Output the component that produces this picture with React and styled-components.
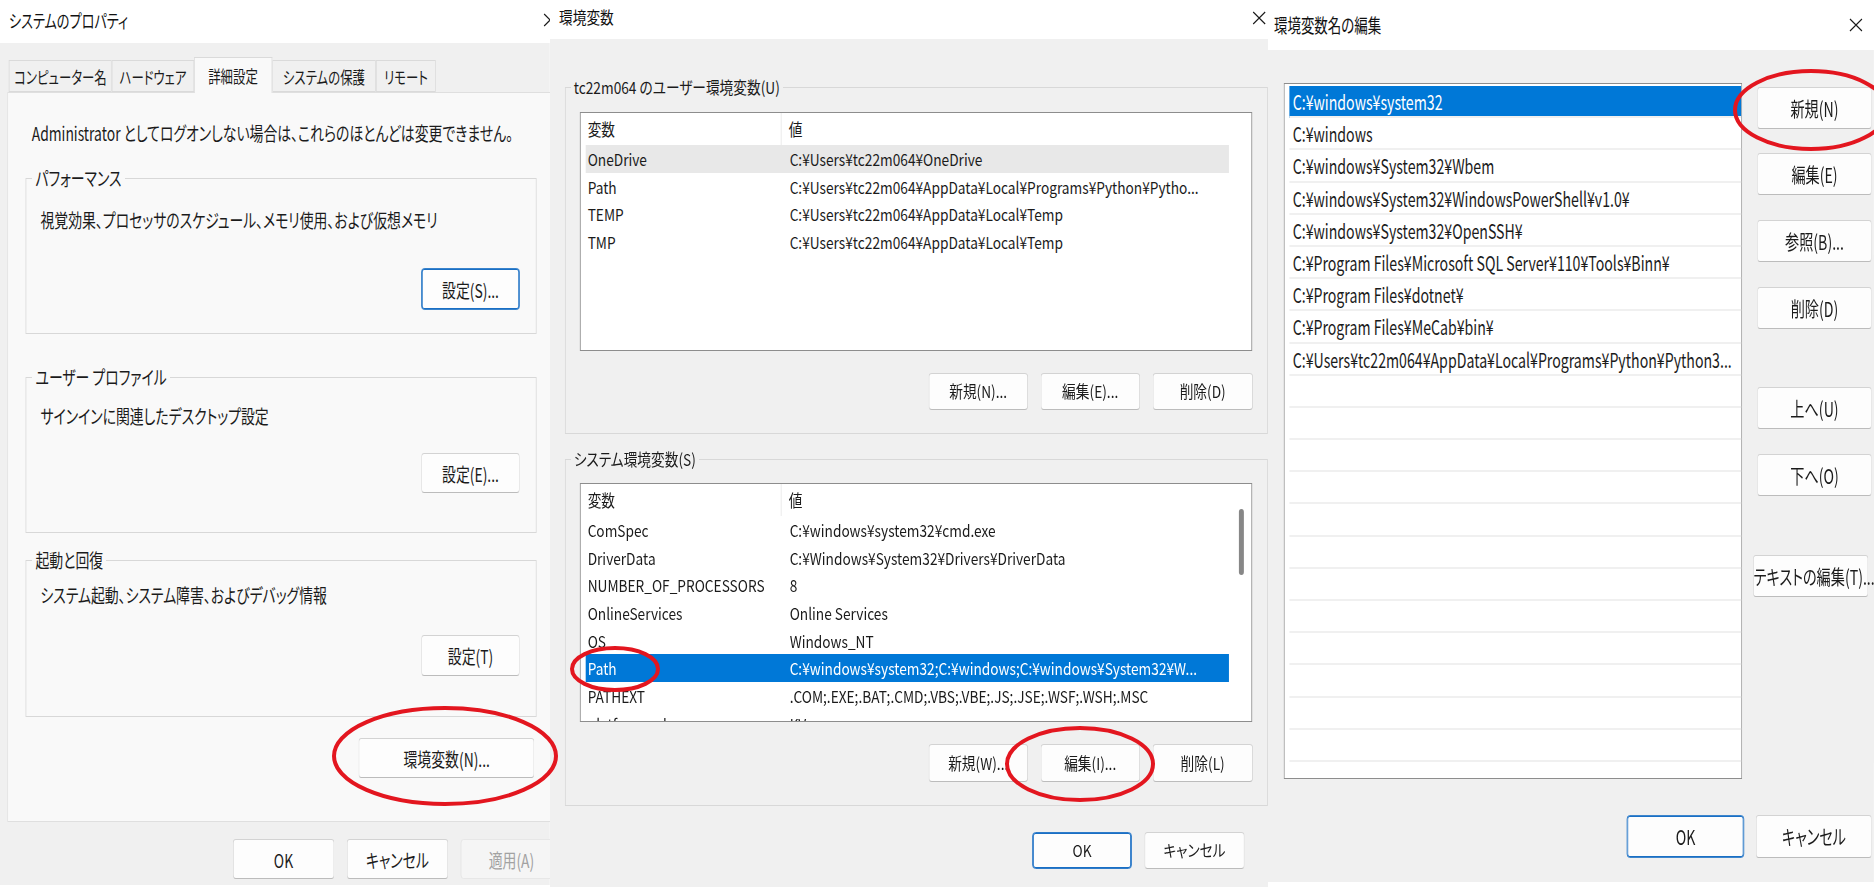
import React from "react";
import styled, { createGlobalStyle } from "styled-components";

// horizontal sizes are written in screen px and divided by the window's squish factor
const hx = (n) => `calc(${n}px / var(--sx))`;

const GlobalStyle = createGlobalStyle`
  html, body {
    margin: 0;
    padding: 0;
    overflow: hidden;
    background: #fff;
  }
  body {
    font-family: "Noto Sans CJK JP", "Noto Sans", sans-serif;
    font-feature-settings: "palt";
    color: #1b1b1b;
  }
`;

const Page = styled.div`
  position: relative;
  display: flex;
  width: 1874px;
  height: 890px;
  overflow: hidden;
  background: #fff;
`;

const Window = styled.section`
  --sx: ${(p) => p.$sx};
  flex: none;
  width: ${(p) => p.$w}px;
  height: 890px;
  overflow: hidden;
  font-size: ${(p) => p.$fs}px;
`;

const Squish = styled.div`
  width: calc(100% / var(--sx));
  height: 100%;
  display: flex;
  flex-direction: column;
  transform: scaleX(var(--sx));
  transform-origin: left top;
`;

const TitleBar = styled.header`
  flex: none;
  height: ${(p) => p.$h}px;
  box-sizing: border-box;
  padding: 0 0 ${(p) => p.$pb || 0}px ${(p) => hx(p.$pl)};
  display: flex;
  align-items: center;
  background: #fff;
  font-size: ${(p) => p.$fs}px;
  line-height: 1;
  color: #111;
`;

const CloseSvg = styled.svg`
  flex: none;
  margin-left: auto;
  margin-right: ${(p) => hx(p.$mr)};
  width: ${hx(14)};
  height: 14px;
`;

const Body = styled.div`
  flex: none;
  height: ${(p) => p.$h}px;
  box-sizing: border-box;
  padding-top: ${(p) => p.$pt}px;
  padding-left: ${(p) => hx(p.$pl || 0)};
  display: flex;
  flex-direction: column;
  background: #f0f0f0;
`;

/* ---------- tabs (system properties) ---------- */

const TabRow = styled.div`
  display: flex;
  align-items: flex-end;
  height: 35px;
  margin-left: ${hx(9)};
  font-size: 17px;
`;

const Tab = styled.div`
  flex: none;
  width: ${(p) => hx(p.$w)};
  height: ${(p) => (p.$active ? 36 : 32)}px;
  box-sizing: border-box;
  margin-bottom: ${(p) => (p.$active ? -1 : 0)}px;
  z-index: ${(p) => (p.$active ? 1 : 0)};
  display: flex;
  align-items: center;
  justify-content: center;
  border: 1px solid #dadada;
  border-bottom: ${(p) => (p.$active ? "none" : "1px solid #dadada")};
  background: ${(p) => (p.$active ? "#f9f9f9" : "#f0f0f0")};
  white-space: nowrap;
`;

const TabPanel = styled.div`
  width: ${hx(560)};
  height: 730px;
  box-sizing: border-box;
  margin-left: ${hx(7)};
  padding: 27px 0 0 ${hx(18)};
  border: 1px solid #dfdfdf;
  background: #f9f9f9;
`;

const Intro = styled.div`
  padding-left: ${hx(6)};
  line-height: 26px;
  white-space: nowrap;
`;

/* ---------- group boxes ---------- */

const Group = styled.fieldset`
  min-width: 0;
  width: ${(p) => hx(p.$w)};
  box-sizing: border-box;
  margin: ${(p) => p.$mt}px 0 0 ${(p) => hx(p.$ml || 0)};
  padding: 0 0 ${(p) => p.$pb}px;
  border: 1px solid #d8d8d8;
`;

const Legend = styled.legend`
  margin-left: ${(p) => hx(p.$ml)};
  padding: 0 ${hx(3)};
  line-height: ${(p) => p.$lh}px;
  white-space: nowrap;
`;

const Desc = styled.div`
  margin-top: ${(p) => p.$mt}px;
  padding-left: ${hx(14)};
  line-height: 26px;
  white-space: nowrap;
`;

const BtnRow = styled.div`
  display: flex;
  justify-content: ${(p) => (p.$start ? "flex-start" : "flex-end")};
  gap: ${(p) => hx(p.$gap || 0)};
  margin-top: ${(p) => p.$mt}px;
  padding: 0 ${(p) => hx(p.$pr || 0)} 0 ${(p) => hx(p.$pl || 0)};
`;

const Btn = styled.button`
  flex: none;
  width: ${(p) => hx(p.$w)};
  height: ${(p) => p.$h}px;
  margin: ${(p) => p.$mt || 0}px 0 0 ${(p) => hx(p.$ml || 0)};
  padding: 0;
  box-sizing: border-box;
  font: inherit;
  line-height: 1;
  white-space: nowrap;
  color: ${(p) => (p.$disabled ? "#a2a2a2" : "#1b1b1b")};
  background: ${(p) => (p.$disabled ? "#f5f5f5" : "#fdfdfd")};
  border: 1px solid ${(p) => (p.$primary ? "#1a6fc4" : p.$disabled ? "#e4e4e4" : "#d3d3d3")};
  border-bottom-color: ${(p) => (p.$primary ? "#1a6fc4" : p.$disabled ? "#e4e4e4" : "#bcbcbc")};
  box-shadow: ${(p) => (p.$primary ? "inset 0 0 0 1px #1a6fc4" : "none")};
  border-radius: 4px;
`;

/* ---------- variable tables ---------- */

const ListBox = styled.div`
  flex: none;
  display: flex;
  width: ${(p) => hx(p.$w)};
  height: ${(p) => p.$h}px;
  box-sizing: border-box;
  margin-top: ${(p) => p.$mt || 0}px;
  margin-left: ${(p) => hx(p.$ml || 0)};
  padding-top: ${(p) => p.$pt || 0}px;
  border: 1px solid #8d8d8d;
  background: #fff;
  overflow: hidden;
`;

const Table = styled.div`
  flex: 1;
  min-width: 0;
`;

const HeadRow = styled.div`
  display: grid;
  grid-template-columns: ${hx(196)} 1fr;
  height: 32px;
  margin-left: ${hx(5)};
`;

const HeadCell = styled.div`
  display: flex;
  align-items: center;
  padding-left: ${(p) => hx(p.$pl)};
  border-right: ${(p) => (p.$divider ? "1px solid #e6e6e6" : "none")};
`;

const VarRow = styled.div`
  display: grid;
  grid-template-columns: ${hx(204)} 1fr;
  align-items: center;
  height: 27.7px;
  margin-left: ${hx(5)};
  white-space: nowrap;
  color: ${(p) => (p.$sel ? "#fff" : "inherit")};
  background: ${(p) => (p.$sel ? "#0078d7" : p.$hover ? "#e8e8e8" : "transparent")};
`;

const Cell = styled.div`
  padding-left: ${(p) => hx(p.$pl || 0)};
  overflow: hidden;
`;

const Track = styled.div`
  flex: none;
  width: ${hx(22)};
`;

const Thumb = styled.div`
  width: ${hx(5)};
  height: ${(p) => p.$h}px;
  margin: ${(p) => p.$top}px 0 0 ${hx(10)};
  border-radius: 3px;
  background: #878787;
`;

/* ---------- path editor ---------- */

const EditorMain = styled.div`
  display: flex;
  align-items: flex-start;
`;

const PathRow = styled.div`
  height: 30.2px;
  margin-left: ${hx(5)};
  padding-left: ${hx(3)};
  display: flex;
  align-items: center;
  border-bottom: 2px solid #f0f0f0;
  white-space: nowrap;
  color: ${(p) => (p.$sel ? "#fff" : "inherit")};
  background: ${(p) => (p.$sel ? "#0078d7" : "transparent")};
`;

const SideCol = styled.div`
  display: flex;
  flex-direction: column;
  margin-left: ${hx(15)};
`;

const Overlay = styled.svg`
  position: absolute;
  left: 0;
  top: 0;
  width: 1874px;
  height: 890px;
  pointer-events: none;
`;

/* ---------- data ---------- */

const tabs = [
  ["コンピューター名", 103],
  ["ハードウェア", 82],
  ["詳細設定", 78, true],
  ["システムの保護", 104],
  ["リモート", 60],
];

const groups = [
  { label: "パフォーマンス", desc: "視覚効果、プロセッサのスケジュール、メモリ使用、および仮想メモリ", btn: "設定(S)...", mt: 19, descMt: 16, btnMt: 35, btnH: 42, pb: 23, focus: true },
  { label: "ユーザー プロファイル", desc: "サインインに関連したデスクトップ設定", btn: "設定(E)...", mt: 30, descMt: 13, btnMt: 24, btnH: 40, pb: 39 },
  { label: "起動と回復", desc: "システム起動、システム障害、およびデバッグ情報", btn: "設定(T)", mt: 14, descMt: 9, btnMt: 27, btnH: 41, pb: 40 },
];

const userVars = [
  ["OneDrive", "C:¥Users¥tc22m064¥OneDrive", "hover"],
  ["Path", "C:¥Users¥tc22m064¥AppData¥Local¥Programs¥Python¥Pytho..."],
  ["TEMP", "C:¥Users¥tc22m064¥AppData¥Local¥Temp"],
  ["TMP", "C:¥Users¥tc22m064¥AppData¥Local¥Temp"],
];

const systemVars = [
  ["ComSpec", "C:¥windows¥system32¥cmd.exe"],
  ["DriverData", "C:¥Windows¥System32¥Drivers¥DriverData"],
  ["NUMBER_OF_PROCESSORS", "8"],
  ["OnlineServices", "Online Services"],
  ["OS", "Windows_NT"],
  ["Path", "C:¥windows¥system32;C:¥windows;C:¥windows¥System32¥W...", "sel"],
  ["PATHEXT", ".COM;.EXE;.BAT;.CMD;.VBS;.VBE;.JS;.JSE;.WSF;.WSH;.MSC"],
  ["platformcode", "KV"],
];

const paths = [
  "C:¥windows¥system32",
  "C:¥windows",
  "C:¥windows¥System32¥Wbem",
  "C:¥windows¥System32¥WindowsPowerShell¥v1.0¥",
  "C:¥windows¥System32¥OpenSSH¥",
  "C:¥Program Files¥Microsoft SQL Server¥110¥Tools¥Binn¥",
  "C:¥Program Files¥dotnet¥",
  "C:¥Program Files¥MeCab¥bin¥",
  "C:¥Users¥tc22m064¥AppData¥Local¥Programs¥Python¥Python3...",
];

const sideButtons = [
  ["新規(N)", 4],
  ["編集(E)", 24],
  ["参照(B)...", 25],
  ["削除(D)", 25],
  ["上へ(U)", 58],
  ["下へ(O)", 25],
  ["テキストの編集(T)...", 59, -4],
];

function CloseX({ mr }) {
  return (
    <CloseSvg $mr={mr} viewBox="0 0 14 14" preserveAspectRatio="none">
      <path d="M1 1L13 13M13 1L1 13" stroke="#1a1a1a" strokeWidth="1.1" fill="none" />
    </CloseSvg>
  );
}

function VarTable({ rows, thumb }) {
  return (
    <>
      <Table>
        <HeadRow>
          <HeadCell $pl={2} $divider>変数</HeadCell>
          <HeadCell $pl={7}>値</HeadCell>
        </HeadRow>
        {rows.map(([name, value, state]) => (
          <VarRow key={name} $sel={state === "sel"} $hover={state === "hover"}>
            <Cell $pl={2}>{name}</Cell>
            <Cell>{value}</Cell>
          </VarRow>
        ))}
      </Table>
      <Track>{thumb && <Thumb $top={25} $h={66} />}</Track>
    </>
  );
}

function SystemProperties() {
  return (
    <Window $w={550} $sx={0.73} $fs={19}>
      <Squish>
        <TitleBar $h={43} $pb={3} $pl={9} $fs={18}>
          システムのプロパティ
          <CloseX mr={-7} />
        </TitleBar>
        <Body $h={842} $pt={14}>
          <TabRow>
            {tabs.map(([name, w, active]) => (
              <Tab key={name} $w={w} $active={active}>
                {name}
              </Tab>
            ))}
          </TabRow>
          <TabPanel>
            <Intro>Administrator としてログオンしない場合は、これらのほとんどは変更できません。</Intro>
            {groups.map((g) => (
              <Group key={g.label} $w={511} $mt={g.mt} $pb={g.pb}>
                <Legend $ml={6} $lh={26}>{g.label}</Legend>
                <Desc $mt={g.descMt}>{g.desc}</Desc>
                <BtnRow $mt={g.btnMt} $pr={16}>
                  <Btn $w={99} $h={g.btnH} $primary={g.focus}>{g.btn}</Btn>
                </BtnRow>
              </Group>
            ))}
            <BtnRow $start $mt={21} $pl={333}>
              <Btn $w={176} $h={40}>環境変数(N)...</Btn>
            </BtnRow>
          </TabPanel>
          <BtnRow $start $mt={17} $pl={233} $gap={13}>
            <Btn $w={101} $h={40}>OK</Btn>
            <Btn $w={101} $h={40}>キャンセル</Btn>
            <Btn $w={101} $h={40} $disabled>適用(A)</Btn>
          </BtnRow>
        </Body>
      </Squish>
    </Window>
  );
}

function EnvironmentVariables() {
  return (
    <Window $w={718} $sx={0.83} $fs={16.5}>
      <Squish>
        <TitleBar $h={39} $pb={4} $pl={9} $fs={16.5}>
          環境変数
          <CloseX mr={2} />
        </TitleBar>
        <Body $h={848} $pt={36}>
          <Group $w={703} $ml={15} $mt={0} $pb={23}>
            <Legend $ml={5} $lh={24}>tc22m064 のユーザー環境変数(U)</Legend>
            <ListBox $w={672} $h={239} $mt={13} $ml={14}>
              <VarTable rows={userVars} />
            </ListBox>
            <BtnRow $mt={22} $pr={14} $gap={12}>
              <Btn $w={100} $h={37}>新規(N)...</Btn>
              <Btn $w={100} $h={37}>編集(E)...</Btn>
              <Btn $w={101} $h={37}>削除(D)</Btn>
            </BtnRow>
          </Group>
          <Group $w={703} $ml={15} $mt={13} $pb={23}>
            <Legend $ml={5} $lh={24}>システム環境変数(S)</Legend>
            <ListBox $w={672} $h={239} $mt={12} $ml={14}>
              <VarTable rows={systemVars} thumb />
            </ListBox>
            <BtnRow $mt={22} $pr={14} $gap={12}>
              <Btn $w={100} $h={38}>新規(W)...</Btn>
              <Btn $w={100} $h={38}>編集(I)...</Btn>
              <Btn $w={101} $h={38}>削除(L)</Btn>
            </BtnRow>
          </Group>
          <BtnRow $mt={26} $pr={23} $gap={12}>
            <Btn $w={100} $h={37} $primary>OK</Btn>
            <Btn $w={101} $h={37}>キャンセル</Btn>
          </BtnRow>
        </Body>
      </Squish>
    </Window>
  );
}

function EditPath() {
  const blanks = Array.from({ length: 13 }, (_, i) => i);
  return (
    <Window $w={606} $sx={0.69} $fs={20.5}>
      <Squish>
        <TitleBar $h={50} $pl={6} $fs={19.5}>
          環境変数名の編集
          <CloseX mr={11} />
        </TitleBar>
        <Body $h={832} $pt={33} $pl={16}>
          <EditorMain>
            <ListBox $w={458} $h={696} $pt={2}>
              <Table>
                {paths.map((p, i) => (
                  <PathRow key={p} $sel={i === 0}>{p}</PathRow>
                ))}
                {blanks.map((i) => (
                  <PathRow key={`blank-${i}`} />
                ))}
              </Table>
            </ListBox>
            <SideCol>
              {sideButtons.map(([label, mt, ml]) => (
                <Btn key={label} $w={115} $h={42} $mt={mt} $ml={ml}>
                  {label}
                </Btn>
              ))}
            </SideCol>
          </EditorMain>
          <BtnRow $mt={36} $pr={2} $gap={12}>
            <Btn $w={117} $h={43} $primary>OK</Btn>
            <Btn $w={116} $h={43}>キャンセル</Btn>
          </BtnRow>
        </Body>
      </Squish>
    </Window>
  );
}

export default function App() {
  return (
    <>
      <GlobalStyle />
      <Page>
        <SystemProperties />
        <EnvironmentVariables />
        <EditPath />
        <Overlay viewBox="0 0 1874 890">
          <g fill="none" stroke="#e3161f" strokeWidth="4">
            <ellipse cx="445" cy="756" rx="111" ry="48" />
            <ellipse cx="615" cy="669" rx="43" ry="21" />
            <ellipse cx="1080" cy="764" rx="73" ry="36" />
            <ellipse cx="1811" cy="110" rx="76" ry="39" />
          </g>
        </Overlay>
      </Page>
    </>
  );
}
